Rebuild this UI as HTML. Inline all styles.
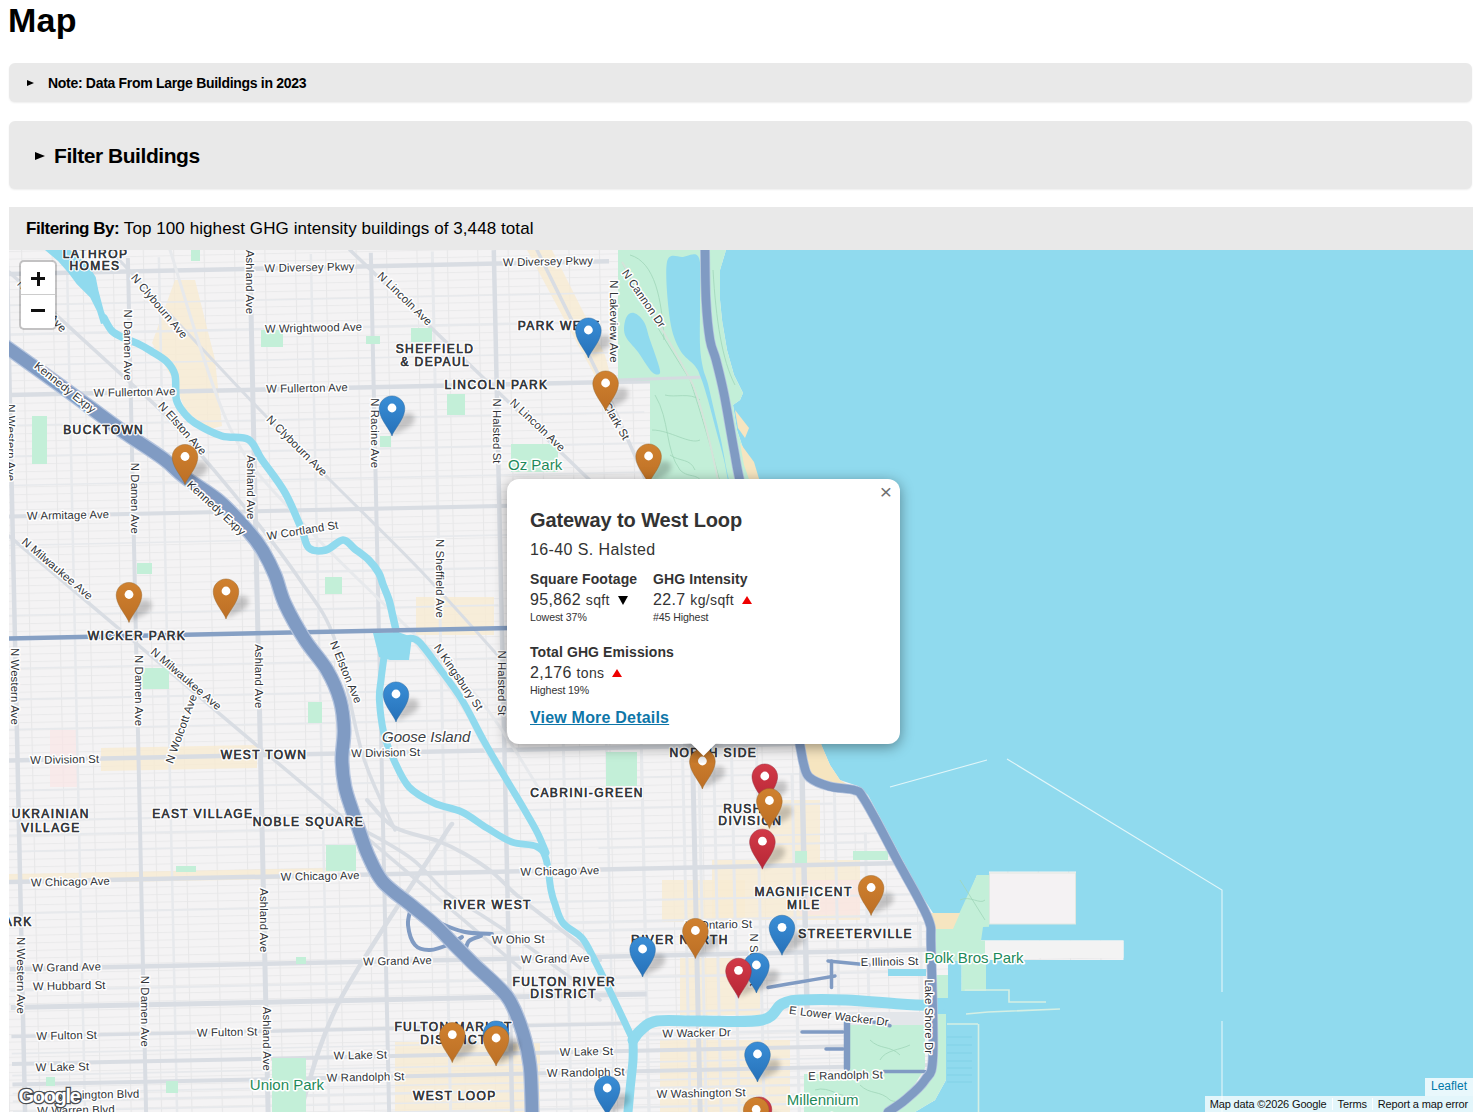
<!DOCTYPE html>
<html><head><meta charset="utf-8"><style>
html,body{margin:0;padding:0;background:#fff;}
body{width:1477px;height:1117px;overflow:hidden;position:relative;font-family:"Liberation Sans",sans-serif;color:#000;}
.abs{position:absolute;white-space:nowrap;}
h1{position:absolute;left:8px;top:0px;margin:0;font-size:34px;font-weight:bold;line-height:40px;letter-spacing:0.3px;}
.box{position:absolute;left:9px;width:1463px;background:#e9e9e9;border-radius:6px;box-shadow:0 1px 2px rgba(0,0,0,0.07);}
#note{top:63px;height:39px;}
#filt{top:121px;height:68px;}
#fby{position:absolute;left:9px;top:207px;width:1464px;height:43px;background:#e9e9e9;}
.tri{position:absolute;width:0;height:0;border-style:solid;border-color:transparent transparent transparent #000;}
#map{position:absolute;left:9px;top:250px;width:1464px;height:862px;overflow:hidden;background:#90daee;}
#map svg{position:absolute;left:0;top:0;}
#zoom{position:absolute;left:10px;top:10px;width:34px;height:66px;border:2px solid rgba(0,0,0,0.2);border-radius:5px;background:#fff;background-clip:padding-box;}
#zoom .zbar{position:absolute;background:#111;}
#zoom .zb{position:absolute;left:0;width:34px;height:33px;text-align:center;font:bold 22px/33px "Liberation Sans",sans-serif;color:#000;}
#popup{position:absolute;left:498px;top:229px;width:393px;height:265px;background:#fff;border-radius:12px;box-shadow:0 3px 14px rgba(0,0,0,0.4);color:#333;}
.pclose{position:absolute;right:8px;top:2px;font-size:21px;line-height:22px;color:#6f6f6f;}
.ptitle{position:absolute;left:23px;top:29px;font-size:20px;font-weight:bold;line-height:24px;white-space:nowrap;letter-spacing:-0.1px;}
.paddr{position:absolute;left:23px;top:61px;font-size:16px;line-height:20px;white-space:nowrap;letter-spacing:0.4px;}
.pcol{position:absolute;white-space:nowrap;}
.plab{font-size:14px;font-weight:bold;line-height:17px;letter-spacing:0.1px;}
.pval{font-size:16px;line-height:19px;margin-top:2px;letter-spacing:0.35px;}
.unit{font-size:14px;}
.arrd{display:inline-block;width:0;height:0;border-style:solid;border-width:9px 5.5px 0 5.5px;border-color:#000 transparent transparent transparent;margin-left:3px;vertical-align:0px;}
.arru{display:inline-block;width:0;height:0;border-style:solid;border-width:0 5.25px 8.5px 5.25px;border-color:transparent transparent #e00 transparent;margin-left:3px;vertical-align:1px;}
.psm{font-size:10.6px;line-height:13px;margin-top:1px;letter-spacing:-0.1px;}
.plink{position:absolute;left:23px;top:229px;font-size:16px;font-weight:bold;line-height:19px;color:#0e76a8;text-decoration:underline;white-space:nowrap;letter-spacing:0.2px;}
.ptipc{position:absolute;left:176px;top:264px;width:40px;height:20px;overflow:hidden;}
.ptip{width:17px;height:17px;padding:1px;margin:-10px auto 0;background:#fff;transform:rotate(45deg);box-shadow:0 3px 14px rgba(0,0,0,0.4);}
#glogo{position:absolute;left:9.5px;top:834px;font:bold 20px/24px "Liberation Sans",sans-serif;color:#fff;-webkit-text-stroke:2.6px #4a4d52;paint-order:stroke fill;letter-spacing:-1.3px;}
#attr1{position:absolute;right:0;top:828px;height:18px;padding:0 6px;background:rgba(255,255,255,0.8);font-size:12px;line-height:17px;color:#0078a8;}
#attr2{position:absolute;right:0;top:846px;height:16px;background:rgba(255,255,255,0.75);font-size:11px;line-height:16px;color:#111;white-space:nowrap;letter-spacing:-0.15px;}
#attr2 span{padding:0 5px;border-left:1px solid rgba(255,255,255,0.9);}
</style></head><body>
<h1>Map</h1>
<div class="box" id="note">
  <div class="tri" style="left:18px;top:17px;border-width:3.5px 0 3.5px 7px;"></div>
  <div class="abs" style="left:39px;top:12px;font-size:14px;font-weight:bold;line-height:17px;letter-spacing:-0.3px;">Note: Data From Large Buildings in 2023</div>
</div>
<div class="box" id="filt">
  <div class="tri" style="left:26px;top:31px;border-width:4.75px 0 4.75px 10.5px;"></div>
  <div class="abs" style="left:45px;top:23px;font-size:21px;font-weight:bold;line-height:24px;letter-spacing:-0.45px;">Filter Buildings</div>
</div>
<div id="fby">
  <div class="abs" style="left:17px;top:12px;font-size:17px;line-height:20px;letter-spacing:0.08px;"><b style="letter-spacing:-0.45px">Filtering By:</b> Top 100 highest GHG intensity buildings of 3,448 total</div>
</div>
<div id="map">
<svg width="1464" height="862" viewBox="9 250 1464 862"><defs><linearGradient id="mgb" x1="0" y1="0" x2="0" y2="1"><stop offset="0" stop-color="#3a8ed6"/><stop offset="1" stop-color="#2671b9"/></linearGradient><linearGradient id="mgr" x1="0" y1="0" x2="0" y2="1"><stop offset="0" stop-color="#d23a48"/><stop offset="1" stop-color="#b72635"/></linearGradient><linearGradient id="mgo" x1="0" y1="0" x2="0" y2="1"><stop offset="0" stop-color="#d0812f"/><stop offset="1" stop-color="#bc6f25"/></linearGradient><filter id="shblur" x="-50%" y="-50%" width="200%" height="200%"><feGaussianBlur stdDeviation="2.6"/></filter></defs><defs><pattern id="grid" patternUnits="userSpaceOnUse" width="30.4" height="7.6" patternTransform="rotate(-1.22 740 680)"><rect width="30.4" height="7.6" fill="#f4f3f4"/><path d="M0,0.5 H30.4" stroke="#eaeaeb" stroke-width="1"/><path d="M0.5,0 V7.6" stroke="#e7e7e8" stroke-width="1"/></pattern></defs><rect x="9" y="250" width="1464" height="862" fill="#90daee"/><path d="M9.0,250.0 L726.0,250.0 L720.0,270.0 L720.0,300.0 L722.0,320.0 L727.0,350.0 L734.0,375.0 L743.0,393.0 L740.0,400.0 L733.0,405.0 L737.0,430.0 L742.0,445.0 L748.0,465.0 L752.0,490.0 L770.0,560.0 L795.0,650.0 L812.0,720.0 L821.0,744.0 L830.0,765.0 L840.0,780.0 L858.0,786.0 L868.0,795.0 L883.0,823.0 L903.0,861.0 L922.0,896.0 L933.0,913.0 L960.0,913.0 L955.0,929.0 L977.0,875.0 L989.0,875.0 L989.0,871.5 L1076.0,871.5 L1076.0,924.0 L982.0,924.0 L980.0,940.5 L1123.5,940.5 L1123.5,960.0 L986.0,960.0 L986.0,991.0 L961.6,991.0 L961.6,961.0 L948.0,961.0 L948.0,997.0 L936.0,997.0 L936.0,1014.0 L946.0,1014.0 L946.0,1080.0 L935.0,1100.0 L915.0,1112.0 L9.0,1112.0 Z" fill="url(#grid)" /><path d="M175.0,280.0 L195.0,280.0 L215.0,359.7 L222.0,426.0 L208.5,429.5 L185.0,409.6 L175.0,383.0 L152.0,343.0 Z" fill="#f8ebd2" opacity="0.8"/><path d="M527.0,250.0 L552.0,250.0 L605.0,355.0 L612.0,382.0 L600.0,385.0 L570.0,330.0 Z" fill="#f8ebd2" opacity="0.8"/><path d="M101.0,748.0 L257.0,745.0 L257.0,768.0 L101.0,771.0 Z" fill="#f8ebd2" opacity="0.8"/><path d="M416.0,597.0 L494.0,597.0 L494.0,635.0 L416.0,635.0 Z" fill="#f8ebd2" opacity="0.8"/><path d="M395.0,1042.0 L540.0,1042.0 L540.0,1112.0 L395.0,1112.0 Z" fill="#f8ebd2" opacity="0.8"/><path d="M680.0,958.0 L760.0,958.0 L760.0,1015.0 L680.0,1015.0 Z" fill="#f8ebd2" opacity="0.8"/><path d="M662.0,880.0 L745.0,880.0 L745.0,922.0 L662.0,922.0 Z" fill="#f8ebd2" opacity="0.8"/><path d="M660.0,1040.0 L790.0,1040.0 L790.0,1112.0 L660.0,1112.0 Z" fill="#f8ebd2" opacity="0.8"/><path d="M712.0,860.0 L860.0,860.0 L860.0,920.0 L712.0,920.0 Z" fill="#f8ebd2" opacity="0.8"/><path d="M760.0,800.0 L820.0,800.0 L820.0,860.0 L760.0,860.0 Z" fill="#f8ebd2" opacity="0.8"/><path d="M9.0,874.0 L330.0,868.0 L330.0,878.0 L9.0,884.0 Z" fill="#f8ebd2" opacity="0.8"/><path d="M50.0,730.0 L78.0,730.0 L78.0,787.0 L50.0,787.0 Z" fill="#f9e6e6" opacity="0.7"/><path d="M800.0,880.0 L860.0,880.0 L860.0,915.0 L800.0,915.0 Z" fill="#f9e6e6" opacity="0.7"/><clipPath id="landclip"><path d="M9.0,250.0 L726.0,250.0 L720.0,270.0 L720.0,300.0 L722.0,320.0 L727.0,350.0 L734.0,375.0 L743.0,393.0 L740.0,400.0 L733.0,405.0 L737.0,430.0 L742.0,445.0 L748.0,465.0 L752.0,490.0 L770.0,560.0 L795.0,650.0 L812.0,720.0 L821.0,744.0 L830.0,765.0 L840.0,780.0 L858.0,786.0 L868.0,795.0 L883.0,823.0 L903.0,861.0 L922.0,896.0 L933.0,913.0 L960.0,913.0 L955.0,929.0 L977.0,875.0 L989.0,875.0 L989.0,871.5 L1076.0,871.5 L1076.0,924.0 L982.0,924.0 L980.0,940.5 L1123.5,940.5 L1123.5,960.0 L986.0,960.0 L986.0,991.0 L961.6,991.0 L961.6,961.0 L948.0,961.0 L948.0,997.0 L936.0,997.0 L936.0,1014.0 L946.0,1014.0 L946.0,1080.0 L935.0,1100.0 L915.0,1112.0 L9.0,1112.0 Z"/></clipPath><g clip-path="url(#landclip)"><g transform="rotate(-1.22 740 680)"><path d="M4,319 H618" stroke="#e7e9ec" stroke-width="2.4"/><path d="M255,562.7 H500" stroke="#e7e9ec" stroke-width="2.4"/><path d="M4,975 H930" stroke="#e7e9ec" stroke-width="2.4"/><path d="M4,1086 H936" stroke="#e7e9ec" stroke-width="2.4"/><path d="M4,1105 H936" stroke="#e7e9ec" stroke-width="2.4"/><path d="M475,927.3 H930" stroke="#e7e9ec" stroke-width="2.8"/><path d="M555,918.8 H930" stroke="#e7e9ec" stroke-width="2.4"/><path d="M4,441 H650" stroke="#e7e9ec" stroke-width="2.0"/><path d="M4,684 H700" stroke="#e7e9ec" stroke-width="2.0"/><path d="M4,805.5 H830" stroke="#e7e9ec" stroke-width="2.0"/><path d="M4,898 H930" stroke="#e7e9ec" stroke-width="2.0"/><path d="M635,1032 H936" stroke="#e7e9ec" stroke-width="2.8"/><path d="M635,1010 H936" stroke="#e7e9ec" stroke-width="2.0"/><path d="M595,845 H866" stroke="#e7e9ec" stroke-width="2.0"/><path d="M4,820 H300" stroke="#e7e9ec" stroke-width="2.0"/><path d="M4,600 H500" stroke="#e7e9ec" stroke-width="1.6"/><path d="M4,470 H650" stroke="#e7e9ec" stroke-width="1.6"/><path d="M4,290 H618" stroke="#e7e9ec" stroke-width="1.6"/><path d="M4,350 H618" stroke="#e7e9ec" stroke-width="1.6"/><path d="M4,410 H650" stroke="#e7e9ec" stroke-width="1.6"/><path d="M4,530 H700" stroke="#e7e9ec" stroke-width="1.6"/><path d="M4,653 H700" stroke="#e7e9ec" stroke-width="1.6"/><path d="M4,714 H700" stroke="#e7e9ec" stroke-width="1.6"/><path d="M4,775 H830" stroke="#e7e9ec" stroke-width="1.6"/><path d="M4,836 H880" stroke="#e7e9ec" stroke-width="1.6"/><path d="M4,1038 H936" stroke="#e7e9ec" stroke-width="1.6"/><path d="M4,1060 H936" stroke="#e7e9ec" stroke-width="1.6"/><path d="M4,1078 H936" stroke="#e7e9ec" stroke-width="1.6"/><path d="M4,1096 H936" stroke="#e7e9ec" stroke-width="1.6"/><path d="M441.5,245 V1122" stroke="#e7e9ec" stroke-width="3"/><path d="M562,735 V1122" stroke="#e7e9ec" stroke-width="3"/><path d="M640,740 V1122" stroke="#e7e9ec" stroke-width="3"/><path d="M681,740 V1122" stroke="#e7e9ec" stroke-width="3"/><path d="M697,740 V1122" stroke="#e7e9ec" stroke-width="3"/><path d="M712,740 V1122" stroke="#e7e9ec" stroke-width="3"/><path d="M730,740 V1122" stroke="#e7e9ec" stroke-width="3"/><path d="M755,740 V1122" stroke="#e7e9ec" stroke-width="3"/><path d="M790,775 V1122" stroke="#e7e9ec" stroke-width="3"/><path d="M832,785 V1010" stroke="#e7e9ec" stroke-width="3"/><path d="M862,835 V1010" stroke="#e7e9ec" stroke-width="3"/><path d="M168,245 V1122" stroke="#e7e9ec" stroke-width="2.5"/><path d="M320,245 V1122" stroke="#e7e9ec" stroke-width="2.5"/><path d="M76,245 V1122" stroke="#e7e9ec" stroke-width="2.5"/><path d="M605,740 V1122" stroke="#e7e9ec" stroke-width="2.5"/><path d="M915,925 V1010" stroke="#e7e9ec" stroke-width="3"/><path d="M4,258.5 H618" stroke="#d9dde3" stroke-width="4.5"/><path d="M4,379.5 H726" stroke="#d9dde3" stroke-width="4.5"/><path d="M4,501 H700" stroke="#d9dde3" stroke-width="4"/><path d="M4,745 H830" stroke="#d9dde3" stroke-width="4.5"/><path d="M4,866.5 H925" stroke="#d9dde3" stroke-width="4.5"/><path d="M4,953.7 H930" stroke="#d9dde3" stroke-width="4.5"/><path d="M4,1048.5 H936" stroke="#d9dde3" stroke-width="4"/><path d="M4,1069 H936" stroke="#d9dde3" stroke-width="4"/><path d="M4,1021 H620" stroke="#d9dde3" stroke-width="3.5"/><path d="M4,992 H640" stroke="#d9dde3" stroke-width="5"/><path d="M16,245 V1122" stroke="#d9dde3" stroke-width="4.5"/><path d="M137,245 V1122" stroke="#d9dde3" stroke-width="4"/><path d="M259,245 V1122" stroke="#d9dde3" stroke-width="5"/><path d="M380,245 V1122" stroke="#d9dde3" stroke-width="4"/><path d="M503,245 V1122" stroke="#d9dde3" stroke-width="4.5"/><path d="M691,740 V1122" stroke="#d9dde3" stroke-width="5"/><path d="M800,740 V1010" stroke="#d9dde3" stroke-width="5.5"/></g></g><path d="M9.0,536.0 C32.5,555.8 108.2,619.7 150.0,655.0 C191.8,690.3 225.0,718.5 260.0,748.0 C295.0,777.5 330.0,806.7 360.0,832.0 C390.0,857.3 413.3,877.3 440.0,900.0 C466.7,922.7 506.7,956.7 520.0,968.0" fill="none" stroke="#d9dde3" stroke-width="3.5" stroke-linecap="round" stroke-linejoin="round" /><path d="M9.0,272.0 C28.2,289.5 97.2,352.3 124.0,377.0 C150.8,401.7 149.5,397.8 170.0,420.0 C190.5,442.2 225.3,483.3 247.0,510.0 C268.7,536.7 285.3,558.3 300.0,580.0 C314.7,601.7 324.5,610.7 335.0,640.0 C345.5,669.3 353.0,724.3 363.0,756.0 C373.0,787.7 389.7,817.7 395.0,830.0" fill="none" stroke="#d9dde3" stroke-width="3.5" stroke-linecap="round" stroke-linejoin="round" /><path d="M110.0,250.0 C135.0,276.7 223.3,371.7 260.0,410.0 C296.7,448.3 303.3,453.3 330.0,480.0 C356.7,506.7 391.3,540.0 420.0,570.0 C448.7,600.0 488.3,645.0 502.0,660.0" fill="none" stroke="#d9dde3" stroke-width="3" stroke-linecap="round" stroke-linejoin="round" /><path d="M350.0,250.0 C370.0,269.2 428.3,325.0 470.0,365.0 C511.7,405.0 578.3,469.2 600.0,490.0" fill="none" stroke="#d9dde3" stroke-width="3.5" stroke-linecap="round" stroke-linejoin="round" /><path d="M537.0,250.0 C547.7,271.7 585.8,348.3 601.0,380.0 C616.2,411.7 619.8,421.7 628.0,440.0 C636.2,458.3 646.3,481.7 650.0,490.0" fill="none" stroke="#d9dde3" stroke-width="3.5" stroke-linecap="round" stroke-linejoin="round" /><path d="M300.0,1112.0 C306.7,1093.3 317.0,1044.5 340.0,1000.0 C363.0,955.5 419.3,874.3 438.0,845.0 C456.7,815.7 449.7,827.5 452.0,824.0" fill="none" stroke="#d9dde3" stroke-width="4.5" stroke-linecap="round" stroke-linejoin="round" /><path d="M413.0,640.0 C417.5,646.0 431.2,663.8 440.0,676.0 C448.8,688.2 457.5,699.0 466.0,713.0 C474.5,727.0 480.8,743.8 491.0,760.0 C501.2,776.2 521.0,801.7 527.0,810.0" fill="none" stroke="#e7e9ec" stroke-width="2.5" stroke-linecap="round" stroke-linejoin="round" /><path d="M170.0,250.0 C180.0,279.7 208.3,383.0 230.0,428.0 C251.7,473.0 271.7,488.0 300.0,520.0 C328.3,552.0 370.0,590.0 400.0,620.0 C430.0,650.0 456.7,671.7 480.0,700.0 C503.3,728.3 530.0,775.0 540.0,790.0" fill="none" stroke="#e7e9ec" stroke-width="3" stroke-linecap="round" stroke-linejoin="round" /><path d="M367.0,800.0 C371.5,804.5 382.2,820.2 394.0,827.0 C405.8,833.8 426.2,836.5 438.0,841.0 C449.8,845.5 456.0,848.8 465.0,854.0 C474.0,859.2 483.0,864.8 492.0,872.0 C501.0,879.2 507.7,887.5 519.0,897.0 C530.3,906.5 546.5,918.5 560.0,929.0 C573.5,939.5 593.3,954.8 600.0,960.0" fill="none" stroke="#d9dde3" stroke-width="4" stroke-linecap="round" stroke-linejoin="round" /><path d="M330.0,815.0 C336.2,817.8 353.3,824.7 367.0,832.0 C380.7,839.3 398.7,848.8 412.0,859.0 C425.3,869.2 435.2,883.5 447.0,893.0 C458.8,902.5 471.0,908.2 483.0,916.0 C495.0,923.8 506.2,931.0 519.0,940.0 C531.8,949.0 546.5,960.0 560.0,970.0 C573.5,980.0 593.3,995.0 600.0,1000.0" fill="none" stroke="#d9dde3" stroke-width="3.5" stroke-linecap="round" stroke-linejoin="round" /><path d="M267.0,536.0 L337.0,525.0" fill="none" stroke="#e7e9ec" stroke-width="2.5" stroke-linecap="round" stroke-linejoin="round" /><path d="M618.0,250.0 L726.0,250.0 L720.0,270.0 L720.0,300.0 L722.0,320.0 L727.0,350.0 L734.0,375.0 L743.0,393.0 L740.0,400.0 L733.0,405.0 L737.0,430.0 L742.0,445.0 L748.0,465.0 L752.0,490.0 L650.0,490.0 L650.0,381.0 L618.0,381.0 Z" fill="#c3efd8" /><path d="M952.0,929.0 L977.0,875.0 L989.0,875.0 L989.0,926.7 L983.0,927.0 L981.0,941.0 L973.0,941.0 L973.0,961.0 L929.0,961.0 L929.0,929.0 Z" fill="#c3efd8" /><path d="M961.6,960.0 L986.0,960.0 L986.0,991.0 L961.6,991.0 Z" fill="#c3efd8" /><path d="M936.0,975.0 L948.0,975.0 L948.0,997.0 L936.0,997.0 Z" fill="#c3efd8" /><path d="M804.0,1074.0 L847.0,1074.0 L847.0,1025.0 L925.0,1025.0 L925.0,1068.0 L905.0,1100.0 L888.0,1112.0 L804.0,1112.0 Z" fill="#c3efd8" /><path d="M935.0,1014.0 L946.0,1014.0 L946.0,1080.0 L935.0,1100.0 L915.0,1112.0 L895.0,1112.0 L922.0,1090.0 L931.0,1070.0 Z" fill="#c3efd8" /><path d="M272.0,1058.0 L306.0,1058.0 L306.0,1112.0 L272.0,1112.0 Z" fill="#c3efd8" /><rect x="511" y="444" width="47" height="28" fill="#c3efd8"/><rect x="411" y="328" width="21" height="14" fill="#c3efd8"/><rect x="447" y="394" width="18" height="21" fill="#c3efd8"/><rect x="380" y="436" width="11" height="11" fill="#c3efd8"/><rect x="191" y="250" width="9" height="11" fill="#c3efd8"/><rect x="261" y="330" width="22" height="17" fill="#c3efd8"/><rect x="32" y="416" width="15" height="48" fill="#c3efd8"/><rect x="366" y="336" width="14" height="8" fill="#c3efd8"/><rect x="137" y="563" width="15" height="11" fill="#c3efd8"/><rect x="142" y="668" width="27" height="21" fill="#c3efd8"/><rect x="308" y="702" width="14" height="21" fill="#c3efd8"/><rect x="325" y="577" width="17" height="17" fill="#c3efd8"/><rect x="326" y="845" width="30" height="26" fill="#c3efd8"/><rect x="606" y="752" width="31" height="34" fill="#c3efd8"/><rect x="853" y="851" width="35" height="9" fill="#c3efd8"/><rect x="795" y="851" width="12" height="12" fill="#c3efd8"/><rect x="936" y="975" width="12" height="23" fill="#c3efd8"/><rect x="46" y="1077" width="9" height="9" fill="#c3efd8"/><rect x="166" y="1081" width="12" height="12" fill="#c3efd8"/><rect x="296" y="957" width="10" height="7" fill="#c3efd8"/><rect x="176" y="866" width="20" height="6" fill="#c3efd8"/><path d="M735.0,410.0 L749.0,428.0 L745.0,438.0 L738.0,428.0 Z" fill="#f6e5c0" /><path d="M740.0,443.0 L754.0,462.0 L760.0,482.0 L750.0,482.0 L744.0,465.0 Z" fill="#f6e5c0" /><path d="M805.0,744.0 L821.0,744.0 L830.0,765.0 L840.0,780.0 L850.0,786.0 L829.0,782.0 L812.0,775.0 L807.0,760.0 Z" fill="#f6e5c0" /><path d="M929.0,913.0 L960.0,913.0 L953.0,929.0 L932.0,929.0 Z" fill="#f6e5c0" /><g fill="none" stroke="#9fd6b9" stroke-width="0.8"><path d="M622,262 C640,300 668,345 690,380 C700,410 712,450 722,490"/><path d="M630,255 C655,262 662,300 664,340"/><path d="M655,395 C670,420 665,450 680,470 C690,480 700,470 705,490"/><path d="M652,430 C670,430 690,445 700,440"/><path d="M713,270 C716,320 722,360 735,385"/><path d="M665,395 C675,398 690,392 700,400 M670,455 C680,462 690,458 695,470"/><path d="M860,1085 C870,1095 880,1090 890,1100 C900,1105 905,1095 915,1090 M815,1090 C830,1085 840,1100 855,1095"/><path d="M870,1040 C880,1050 890,1045 900,1055 M880,1060 C885,1050 900,1050 910,1045"/><path d="M960,880 L985,920 M960,900 C970,895 980,905 985,900"/></g><path d="M622,262 C645,300 675,350 693,385 C703,410 712,450 720,490" fill="none" stroke="#d5e3da" stroke-width="2"/><path d="M618,380 L706,377" stroke="#d5dbe0" stroke-width="3"/><rect x="989.5" y="873" width="86" height="51" fill="#f4f2f3" stroke="#dfe8e2"/><rect x="981" y="940.5" width="142.5" height="17.5" fill="#f3f3f3"/><rect x="973" y="940.5" width="12" height="17.5" fill="#c3efd8"/><path d="M667.0,262.0 C669.2,251.5 677.7,257.7 683.0,257.0 C688.3,256.3 696.2,250.8 699.0,258.0 C701.8,265.2 699.8,285.5 700.0,300.0 C700.2,314.5 699.5,333.7 700.0,345.0 C700.5,356.3 701.7,361.5 703.0,368.0 C704.3,374.5 706.2,377.0 708.0,384.0 C709.8,391.0 711.8,400.7 714.0,410.0 C716.2,419.3 718.5,428.3 721.0,440.0 C723.5,451.7 726.5,470.8 729.0,480.0 C731.5,489.2 735.7,492.5 736.0,495.0 C736.3,497.5 733.0,500.8 731.0,495.0 C729.0,489.2 726.5,470.8 724.0,460.0 C721.5,449.2 718.7,440.0 716.0,430.0 C713.3,420.0 710.5,408.7 708.0,400.0 C705.5,391.3 703.2,383.7 701.0,378.0 C698.8,372.3 698.5,370.7 695.0,366.0 C691.5,361.3 684.2,357.7 680.0,350.0 C675.8,342.3 672.2,334.7 670.0,320.0 C667.8,305.3 664.8,272.5 667.0,262.0 Z" fill="#90daee" /><path d="M626.0,318.0 C627.5,314.3 631.0,312.3 634.0,313.0 C637.0,313.7 641.3,317.5 644.0,322.0 C646.7,326.5 647.8,333.7 650.0,340.0 C652.2,346.3 655.3,354.5 657.0,360.0 C658.7,365.5 660.8,371.0 660.0,373.0 C659.2,375.0 655.7,375.5 652.0,372.0 C648.3,368.5 642.5,358.2 638.0,352.0 C633.5,345.8 627.0,340.7 625.0,335.0 C623.0,329.3 624.5,321.7 626.0,318.0 Z" fill="#90daee" /><path d="M888.0,969.0 L926.0,969.0 L926.0,976.0 L888.0,976.0 Z" fill="#90daee" /><path d="M45.0,250.0 L70.0,250.0 L88.0,265.0 L95.7,277.0 L98.4,290.6 L103.8,311.0 L108.0,322.0 L101.0,324.0 L97.0,311.0 L90.2,297.4 L76.7,283.9 L68.6,273.0 L58.0,261.0 Z" fill="#90daee" /><path d="M104.0,318.0 C105.3,320.2 108.7,327.7 112.0,331.0 C115.3,334.3 119.7,335.9 124.0,338.0 C128.3,340.1 133.1,341.3 137.6,343.5 C142.1,345.7 146.2,348.0 151.0,351.0 C155.8,354.0 162.7,357.6 166.7,361.6 C170.7,365.6 173.4,368.6 175.0,375.0 C176.6,381.4 174.8,393.5 176.5,400.0 C178.2,406.5 181.9,410.2 185.0,414.0 C188.1,417.8 188.9,419.3 195.0,423.0 C201.1,426.7 212.9,433.2 221.8,436.0 C230.7,438.8 241.8,435.6 248.4,439.5 C255.1,443.4 255.6,450.5 261.7,459.4 C267.8,468.3 278.4,481.1 285.0,492.7 C291.6,504.3 297.6,520.1 301.6,529.3 C305.6,538.5 304.9,544.5 309.0,548.0 C313.1,551.5 320.3,551.3 326.0,550.0 C331.7,548.7 338.2,540.2 343.0,540.0 C347.8,539.8 350.2,545.4 354.5,548.7 C358.8,552.0 364.8,556.0 368.8,560.0 C372.9,564.0 376.4,568.9 378.8,573.0 C381.2,577.1 381.3,580.0 383.0,584.5 C384.7,589.0 387.3,594.6 389.0,600.0 C390.7,605.4 391.8,612.0 393.0,617.0 C394.2,622.0 395.5,627.8 396.0,630.0" fill="none" stroke="#90daee" stroke-width="7.5" stroke-linecap="round" stroke-linejoin="round" /><path d="M373.0,633.0 L398.0,632.0 L412.0,637.0 L409.0,660.0 L390.0,660.0 L379.0,657.0 Z" fill="#90daee" /><path d="M384.0,657.0 C383.5,660.8 381.8,672.8 381.0,680.0 C380.2,687.2 378.9,691.0 379.4,700.0 C379.9,709.0 381.7,724.2 384.0,734.0 C386.3,743.8 389.2,750.2 393.4,759.0 C397.6,767.8 402.2,779.7 409.0,787.0 C415.8,794.3 425.2,798.8 434.0,803.0 C442.8,807.2 453.2,807.8 462.0,812.0 C470.8,816.2 478.7,823.0 487.0,828.0 C495.3,833.0 503.5,838.9 511.8,842.0 C520.1,845.1 531.0,843.7 536.7,846.5 C542.4,849.3 543.6,851.8 546.0,859.0 C548.4,866.2 549.5,882.5 551.0,890.0 C552.5,897.5 553.0,898.5 555.0,904.0 C557.0,909.5 558.5,917.3 563.0,923.0 C567.5,928.7 576.8,932.0 582.0,938.0 C587.2,944.0 590.0,951.5 594.0,959.0 C598.0,966.5 602.0,974.8 606.0,983.0 C610.0,991.2 613.5,998.5 618.0,1008.0 C622.5,1017.5 630.5,1034.7 633.0,1040.0" fill="none" stroke="#90daee" stroke-width="7" stroke-linecap="round" stroke-linejoin="round" /><path d="M405.0,639.0 C407.2,639.3 412.2,636.0 418.0,641.0 C423.8,646.0 432.7,659.2 440.0,669.0 C447.3,678.8 454.7,688.1 462.0,700.0 C469.3,711.9 476.4,727.6 483.7,740.6 C490.9,753.6 498.8,766.6 505.5,778.0 C512.2,789.4 518.8,800.0 524.0,809.0 C529.2,818.0 533.3,824.7 537.0,832.0 C540.7,839.3 544.5,849.2 546.0,852.7" fill="none" stroke="#90daee" stroke-width="7" stroke-linecap="round" stroke-linejoin="round" /><path d="M633.0,1040.0 C634.3,1038.3 637.0,1033.2 641.0,1030.0 C645.0,1026.8 647.2,1022.5 657.0,1021.0 C666.8,1019.5 682.5,1021.2 700.0,1021.0 C717.5,1020.8 748.3,1022.8 762.0,1020.0 C775.7,1017.2 775.3,1007.3 782.0,1004.0 C788.7,1000.7 791.3,1000.7 802.0,1000.0 C812.7,999.3 829.7,999.3 846.0,1000.0 C862.3,1000.7 884.3,1003.0 900.0,1004.0 C915.7,1005.0 933.3,1005.7 940.0,1006.0" fill="none" stroke="#90daee" stroke-width="11" stroke-linecap="round" stroke-linejoin="round" /><path d="M633.0,1040.0 C633.0,1043.3 633.5,1051.7 633.0,1060.0 C632.5,1068.3 630.8,1081.3 630.0,1090.0 C629.2,1098.7 628.3,1108.3 628.0,1112.0" fill="none" stroke="#90daee" stroke-width="9" stroke-linecap="round" stroke-linejoin="round" /><path d="M890,787 L987,760 M1007,759 L1222,890 L1222,992 M1222,1021 L1222,1112" stroke="#e2f6f9" stroke-width="1.1" fill="none"/><path d="M964.7,990 H1009 V1002 H1046 M966,1014 L988,1012 L1060,1009 M978.5,1024 L978.5,1112 M947,1024 H978" stroke="#d5efe4" stroke-width="1.6" fill="none"/><path d="M947,1037 H972 M947,1045 H972 M947,1053 H972 M947,1061 H972 M947,1068 H972 M947,1075 H972 M947,1082 H972" stroke="#7fcfe3" stroke-width="0.8" fill="none"/><rect x="847" y="1012" width="78" height="13" fill="#e3e6ea"/><g transform="rotate(-1.22 740 680)"><path d="M4,623 H760" stroke="#86a0c4" stroke-width="4.5"/></g><path d="M847.0,1023.0 L847.0,1068.0" fill="none" stroke="#809bc3" stroke-width="6.5" stroke-linecap="round" stroke-linejoin="round" /><path d="M802.0,1032.0 L843.0,1032.0" fill="none" stroke="#809bc3" stroke-width="3.5" stroke-linecap="round" stroke-linejoin="round" /><path d="M826.0,1049.0 L843.0,1049.0" fill="none" stroke="#809bc3" stroke-width="3.5" stroke-linecap="round" stroke-linejoin="round" /><path d="M768.0,987.5 C773.3,986.6 788.8,983.9 800.0,982.0 C811.2,980.1 829.2,977.0 835.0,976.0" fill="none" stroke="#809bc3" stroke-width="3.5" stroke-linecap="round" stroke-linejoin="round" /><path d="M828.0,961.0 L869.0,965.0" fill="none" stroke="#809bc3" stroke-width="3.5" stroke-linecap="round" stroke-linejoin="round" /><path d="M831.5,961.0 L831.5,987.5" fill="none" stroke="#809bc3" stroke-width="3.5" stroke-linecap="round" stroke-linejoin="round" /><path d="M884.0,1071.5 L925.0,1071.5" fill="none" stroke="#809bc3" stroke-width="3.5" stroke-linecap="round" stroke-linejoin="round" /><path d="M860.0,1019.0 L890.0,1025.7" fill="none" stroke="#809bc3" stroke-width="3.5" stroke-linecap="round" stroke-linejoin="round" /><path d="M411.0,908.0 C410.5,910.8 407.3,918.8 408.0,925.0 C408.7,931.2 411.3,940.8 415.0,945.0 C418.7,949.2 424.2,950.2 430.0,950.0 C435.8,949.8 444.7,946.2 450.0,944.0 C455.3,941.8 460.0,938.2 462.0,937.0" fill="none" stroke="#809bc3" stroke-width="4" stroke-linecap="round" stroke-linejoin="round" /><path d="M412.0,907.0 C416.7,909.7 431.2,918.8 440.0,923.0 C448.8,927.2 456.3,930.2 465.0,932.0 C473.7,933.8 487.5,933.7 492.0,934.0" fill="none" stroke="#809bc3" stroke-width="4" stroke-linecap="round" stroke-linejoin="round" /><path d="M465.0,952.0 C465.7,950.2 466.3,943.7 469.0,941.0 C471.7,938.3 479.0,936.8 481.0,936.0" fill="none" stroke="#809bc3" stroke-width="4" stroke-linecap="round" stroke-linejoin="round" /><path d="M5.0,346.0 C15.0,353.2 45.8,375.1 65.0,389.0 C84.2,402.9 103.7,417.7 120.0,429.3 C136.3,440.9 152.2,450.6 163.0,458.5 C173.8,466.4 175.0,469.8 184.5,477.0 C194.0,484.2 209.2,492.5 220.0,501.7 C230.8,510.9 241.8,523.8 249.0,532.0 C256.2,540.2 258.7,543.8 263.0,551.0 C267.3,558.2 271.3,566.2 275.0,575.0 C278.7,583.8 280.0,593.2 285.0,604.0 C290.0,614.8 298.0,629.0 305.0,640.0 C312.0,651.0 321.2,660.0 327.0,670.0 C332.8,680.0 337.2,690.0 340.0,700.0 C342.8,710.0 343.7,720.0 344.0,730.0 C344.3,740.0 341.8,750.5 342.0,760.0 C342.2,769.5 343.3,778.7 345.0,787.0 C346.7,795.3 349.8,803.3 352.0,810.0 C354.2,816.7 355.3,819.5 358.0,827.0 C360.7,834.5 363.8,845.8 368.0,855.0 C372.2,864.2 375.7,873.6 383.0,882.0 C390.3,890.4 402.9,898.4 411.6,905.6 C420.3,912.8 427.8,918.4 435.0,925.0 C442.2,931.6 448.1,938.4 454.6,945.0 C461.2,951.6 467.5,958.1 474.3,964.7 C481.1,971.3 489.8,978.4 495.7,984.4 C501.6,990.4 505.4,992.9 510.0,1001.0 C514.5,1009.1 519.7,1022.2 523.0,1033.0 C526.3,1043.8 528.5,1052.8 530.0,1066.0 C531.5,1079.2 531.7,1104.3 532.0,1112.0" fill="none" stroke="#b4c4de" stroke-width="15" stroke-linecap="round" stroke-linejoin="round" /><path d="M5.0,346.0 C15.0,353.2 45.8,375.1 65.0,389.0 C84.2,402.9 103.7,417.7 120.0,429.3 C136.3,440.9 152.2,450.6 163.0,458.5 C173.8,466.4 175.0,469.8 184.5,477.0 C194.0,484.2 209.2,492.5 220.0,501.7 C230.8,510.9 241.8,523.8 249.0,532.0 C256.2,540.2 258.7,543.8 263.0,551.0 C267.3,558.2 271.3,566.2 275.0,575.0 C278.7,583.8 280.0,593.2 285.0,604.0 C290.0,614.8 298.0,629.0 305.0,640.0 C312.0,651.0 321.2,660.0 327.0,670.0 C332.8,680.0 337.2,690.0 340.0,700.0 C342.8,710.0 343.7,720.0 344.0,730.0 C344.3,740.0 341.8,750.5 342.0,760.0 C342.2,769.5 343.3,778.7 345.0,787.0 C346.7,795.3 349.8,803.3 352.0,810.0 C354.2,816.7 355.3,819.5 358.0,827.0 C360.7,834.5 363.8,845.8 368.0,855.0 C372.2,864.2 375.7,873.6 383.0,882.0 C390.3,890.4 402.9,898.4 411.6,905.6 C420.3,912.8 427.8,918.4 435.0,925.0 C442.2,931.6 448.1,938.4 454.6,945.0 C461.2,951.6 467.5,958.1 474.3,964.7 C481.1,971.3 489.8,978.4 495.7,984.4 C501.6,990.4 505.4,992.9 510.0,1001.0 C514.5,1009.1 519.7,1022.2 523.0,1033.0 C526.3,1043.8 528.5,1052.8 530.0,1066.0 C531.5,1079.2 531.7,1104.3 532.0,1112.0" fill="none" stroke="#809bc3" stroke-width="12.5" stroke-linecap="round" stroke-linejoin="round" /><path d="M705.0,250.0 C705.2,258.3 705.2,285.0 706.0,300.0 C706.8,315.0 708.3,330.0 710.0,340.0 C711.7,350.0 713.7,351.0 716.0,360.0 C718.3,369.0 721.0,379.0 724.0,394.0 C727.0,409.0 731.0,434.0 734.0,450.0 C737.0,466.0 736.0,465.0 742.0,490.0 C748.0,515.0 762.0,565.0 770.0,600.0 C778.0,635.0 785.0,676.0 790.0,700.0 C795.0,724.0 797.4,733.4 799.7,744.0 C802.0,754.6 802.0,758.0 803.6,763.6 C805.2,769.2 805.2,773.6 809.5,777.4 C813.8,781.2 821.7,784.2 829.2,786.3 C836.8,788.4 849.2,788.4 854.8,790.2 C860.4,792.0 858.8,791.2 862.7,797.0 C866.7,802.8 872.6,813.9 878.5,824.7 C884.4,835.6 891.7,850.0 898.2,862.1 C904.8,874.2 912.5,887.3 917.8,897.5 C923.0,907.7 927.5,915.2 929.7,923.1 C931.9,931.0 930.5,923.0 931.0,945.0 C931.5,967.0 934.0,1032.5 933.0,1055.0 C932.0,1077.5 929.7,1072.5 925.0,1080.0 C920.3,1087.5 911.2,1094.7 905.0,1100.0 C898.8,1105.3 890.8,1110.0 888.0,1112.0" fill="none" stroke="#b4c4de" stroke-width="10" stroke-linecap="round" stroke-linejoin="round" /><path d="M705.0,250.0 C705.2,258.3 705.2,285.0 706.0,300.0 C706.8,315.0 708.3,330.0 710.0,340.0 C711.7,350.0 713.7,351.0 716.0,360.0 C718.3,369.0 721.0,379.0 724.0,394.0 C727.0,409.0 731.0,434.0 734.0,450.0 C737.0,466.0 736.0,465.0 742.0,490.0 C748.0,515.0 762.0,565.0 770.0,600.0 C778.0,635.0 785.0,676.0 790.0,700.0 C795.0,724.0 797.4,733.4 799.7,744.0 C802.0,754.6 802.0,758.0 803.6,763.6 C805.2,769.2 805.2,773.6 809.5,777.4 C813.8,781.2 821.7,784.2 829.2,786.3 C836.8,788.4 849.2,788.4 854.8,790.2 C860.4,792.0 858.8,791.2 862.7,797.0 C866.7,802.8 872.6,813.9 878.5,824.7 C884.4,835.6 891.7,850.0 898.2,862.1 C904.8,874.2 912.5,887.3 917.8,897.5 C923.0,907.7 927.5,915.2 929.7,923.1 C931.9,931.0 930.5,923.0 931.0,945.0 C931.5,967.0 934.0,1032.5 933.0,1055.0 C932.0,1077.5 929.7,1072.5 925.0,1080.0 C920.3,1087.5 911.2,1094.7 905.0,1100.0 C898.8,1105.3 890.8,1110.0 888.0,1112.0" fill="none" stroke="#809bc3" stroke-width="8.5" stroke-linecap="round" stroke-linejoin="round" /><g font-family="Liberation Sans, sans-serif" font-size="11.3" letter-spacing="0.15" fill="#303337" stroke="#fff" stroke-width="3" stroke-linejoin="round" paint-order="stroke" text-anchor="middle" dominant-baseline="central"><text transform="translate(309.5,267.2) rotate(-1.2)" x="0" y="0">W Diversey Pkwy</text><text transform="translate(548.0,261.3) rotate(-1.2)" x="0" y="0">W Diversey Pkwy</text><text transform="translate(249.8,282.0) rotate(90)" x="0" y="0">Ashland Ave</text><text transform="translate(159.6,306.2) rotate(49.8)" x="0" y="0">N Clybourn Ave</text><text transform="translate(313.5,327.7) rotate(-1.2)" x="0" y="0">W Wrightwood Ave</text><text transform="translate(128.2,345.0) rotate(90)" x="0" y="0">N Damen Ave</text><text transform="translate(42.0,306.0) rotate(47)" x="0" y="0">N Elston Ave</text><text transform="translate(65.2,387.4) rotate(38.4)" x="0" y="0">Kennedy Expy</text><text transform="translate(134.6,392.0) rotate(-1.2)" x="0" y="0">W Fullerton Ave</text><text transform="translate(307.0,388.0) rotate(-1.2)" x="0" y="0">W Fullerton Ave</text><text transform="translate(182.5,428.3) rotate(48.5)" x="0" y="0">N Elston Ave</text><text transform="translate(11.1,442.7) rotate(90)" x="0" y="0">N Western Ave</text><text transform="translate(134.6,498.3) rotate(90)" x="0" y="0">N Damen Ave</text><text transform="translate(251.2,487.3) rotate(90)" x="0" y="0">Ashland Ave</text><text transform="translate(297.0,445.6) rotate(45)" x="0" y="0">N Clybourn Ave</text><text transform="translate(374.7,433.2) rotate(90)" x="0" y="0">N Racine Ave</text><text transform="translate(216.5,508.0) rotate(42.3)" x="0" y="0">Kennedy Expy</text><text transform="translate(68.0,515.0) rotate(-1.2)" x="0" y="0">W Armitage Ave</text><text transform="translate(302.5,530.3) rotate(-9)" x="0" y="0">W Cortland St</text><text transform="translate(57.5,568.7) rotate(40.3)" x="0" y="0">N Milwaukee Ave</text><text transform="translate(405.0,298.6) rotate(44.2)" x="0" y="0">N Lincoln Ave</text><text transform="translate(614.0,321.5) rotate(90)" x="0" y="0">N Lakeview Ave</text><text transform="translate(643.9,298.5) rotate(55.3)" x="0" y="0">N Cannon Dr</text><text transform="translate(496.8,431.0) rotate(90)" x="0" y="0">N Halsted St</text><text transform="translate(537.7,424.9) rotate(43.4)" x="0" y="0">N Lincoln Ave</text><text transform="translate(616.5,421.0) rotate(60)" x="0" y="0">Clark St</text><text transform="translate(440.0,578.5) rotate(90)" x="0" y="0">N Sheffield Ave</text><text transform="translate(15.2,686.4) rotate(90)" x="0" y="0">N Western Ave</text><text transform="translate(138.8,690.6) rotate(90)" x="0" y="0">N Damen Ave</text><text transform="translate(186.2,678.8) rotate(40.6)" x="0" y="0">N Milwaukee Ave</text><text transform="translate(181.2,728.7) rotate(-70.2)" x="0" y="0">N Wolcott Ave</text><text transform="translate(259.0,676.3) rotate(90)" x="0" y="0">Ashland Ave</text><text transform="translate(346.1,672.0) rotate(67.4)" x="0" y="0">N Elston Ave</text><text transform="translate(458.7,677.2) rotate(55.6)" x="0" y="0">N Kingsbury St</text><text transform="translate(64.7,759.4) rotate(-1.2)" x="0" y="0">W Division St</text><text transform="translate(385.6,752.6) rotate(-1.2)" x="0" y="0">W Division St</text><text transform="translate(70.4,881.6) rotate(-1.2)" x="0" y="0">W Chicago Ave</text><text transform="translate(320.2,875.9) rotate(-1.2)" x="0" y="0">W Chicago Ave</text><text transform="translate(559.9,871.0) rotate(-1.2)" x="0" y="0">W Chicago Ave</text><text transform="translate(21.0,975.4) rotate(90)" x="0" y="0">N Western Ave</text><text transform="translate(264.0,920.4) rotate(90)" x="0" y="0">Ashland Ave</text><text transform="translate(66.7,967.0) rotate(-1.2)" x="0" y="0">W Grand Ave</text><text transform="translate(397.5,960.8) rotate(-1.2)" x="0" y="0">W Grand Ave</text><text transform="translate(555.2,958.6) rotate(-1.2)" x="0" y="0">W Grand Ave</text><text transform="translate(69.2,985.6) rotate(-1.2)" x="0" y="0">W Hubbard St</text><text transform="translate(144.9,1011.3) rotate(90)" x="0" y="0">N Damen Ave</text><text transform="translate(66.7,1035.3) rotate(-1.2)" x="0" y="0">W Fulton St</text><text transform="translate(227.2,1032.0) rotate(-1.2)" x="0" y="0">W Fulton St</text><text transform="translate(266.8,1038.9) rotate(90)" x="0" y="0">Ashland Ave</text><text transform="translate(62.5,1066.8) rotate(-1.2)" x="0" y="0">W Lake St</text><text transform="translate(360.5,1055.0) rotate(-1.2)" x="0" y="0">W Lake St</text><text transform="translate(586.5,1051.4) rotate(-1.2)" x="0" y="0">W Lake St</text><text transform="translate(365.6,1077.0) rotate(-1.2)" x="0" y="0">W Randolph St</text><text transform="translate(585.8,1072.3) rotate(-1.2)" x="0" y="0">W Randolph St</text><text transform="translate(89.0,1094.6) rotate(-1.2)" x="0" y="0">W Washington Blvd</text><text transform="translate(76.0,1110.0) rotate(-1.2)" x="0" y="0">W Warren Blvd</text><text transform="translate(518.3,939.2) rotate(-1.2)" x="0" y="0">W Ohio St</text><text transform="translate(719.0,924.5) rotate(-1.2)" x="0" y="0">W Ontario St</text><text transform="translate(889.6,961.5) rotate(-1.2)" x="0" y="0">E Illinois St</text><text transform="translate(838.9,1016.0) rotate(7)" x="0" y="0">E Lower Wacker Dr</text><text transform="translate(928.5,1016.8) rotate(90)" x="0" y="0">Lake Shore Dr</text><text transform="translate(696.7,1032.8) rotate(-1.2)" x="0" y="0">W Wacker Dr</text><text transform="translate(701.2,1093.1) rotate(-1.2)" x="0" y="0">W Washington St</text><text transform="translate(845.6,1075.1) rotate(-1.2)" x="0" y="0">E Randolph St</text><text transform="translate(754.0,960.0) rotate(90)" x="0" y="0">N State St</text><text transform="translate(501.5,683.0) rotate(90)" x="0" y="0">N Halsted St</text></g><g font-family="Liberation Sans, sans-serif" font-size="12" letter-spacing="1.4" fill="#33363a" stroke="#fff" stroke-width="3" stroke-linejoin="round" paint-order="stroke" text-anchor="middle" dominant-baseline="central"><text x="95.5" y="254.0">LATHROP</text><text x="95.0" y="266.2">HOMES</text><text x="103.7" y="430.4">BUCKTOWN</text><text x="435.0" y="349.1">SHEFFIELD</text><text x="435.3" y="361.9">&amp; DEPAUL</text><text x="559.0" y="326.3">PARK WEST</text><text x="496.5" y="384.6">LINCOLN PARK</text><text x="137.0" y="635.5">WICKER PARK</text><text x="264.0" y="755.0">WEST TOWN</text><text x="50.8" y="814.2">UKRAINIAN</text><text x="50.8" y="827.7">VILLAGE</text><text x="202.8" y="814.2">EAST VILLAGE</text><text x="308.5" y="822.0">NOBLE SQUARE</text><text x="487.5" y="905.2">RIVER WEST</text><text x="14.0" y="922.3">PARK</text><text x="453.6" y="1027.2">FULTON MARKET</text><text x="453.6" y="1040.0">DISTRICT</text><text x="454.8" y="1096.0">WEST LOOP</text><text x="587.1" y="793.3">CABRINI-GREEN</text><text x="564.3" y="981.7">FULTON RIVER</text><text x="563.6" y="994.3">DISTRICT</text><text x="713.3" y="752.5">NORTH SIDE</text><text x="750.0" y="808.7">RUSH &amp;</text><text x="750.3" y="821.2">DIVISION</text><text x="803.6" y="892.3">MAGNIFICENT</text><text x="803.8" y="905.2">MILE</text><text x="680.0" y="939.7">RIVER NORTH</text><text x="855.7" y="933.6">STREETERVILLE</text></g><g font-family="Liberation Sans, sans-serif" font-size="12" letter-spacing="1.4" fill="#33363a" stroke="#33363a" stroke-width="0.45" text-anchor="middle" dominant-baseline="central"><text x="95.5" y="254.0">LATHROP</text><text x="95.0" y="266.2">HOMES</text><text x="103.7" y="430.4">BUCKTOWN</text><text x="435.0" y="349.1">SHEFFIELD</text><text x="435.3" y="361.9">&amp; DEPAUL</text><text x="559.0" y="326.3">PARK WEST</text><text x="496.5" y="384.6">LINCOLN PARK</text><text x="137.0" y="635.5">WICKER PARK</text><text x="264.0" y="755.0">WEST TOWN</text><text x="50.8" y="814.2">UKRAINIAN</text><text x="50.8" y="827.7">VILLAGE</text><text x="202.8" y="814.2">EAST VILLAGE</text><text x="308.5" y="822.0">NOBLE SQUARE</text><text x="487.5" y="905.2">RIVER WEST</text><text x="14.0" y="922.3">PARK</text><text x="453.6" y="1027.2">FULTON MARKET</text><text x="453.6" y="1040.0">DISTRICT</text><text x="454.8" y="1096.0">WEST LOOP</text><text x="587.1" y="793.3">CABRINI-GREEN</text><text x="564.3" y="981.7">FULTON RIVER</text><text x="563.6" y="994.3">DISTRICT</text><text x="713.3" y="752.5">NORTH SIDE</text><text x="750.0" y="808.7">RUSH &amp;</text><text x="750.3" y="821.2">DIVISION</text><text x="803.6" y="892.3">MAGNIFICENT</text><text x="803.8" y="905.2">MILE</text><text x="680.0" y="939.7">RIVER NORTH</text><text x="855.7" y="933.6">STREETERVILLE</text></g><g font-family="Liberation Sans, sans-serif" font-size="15" fill="#1e8a5a" stroke="#fff" stroke-width="3" stroke-linejoin="round" paint-order="stroke" text-anchor="middle" dominant-baseline="central"><text x="535.1" y="464.3">Oz Park</text><text x="286.9" y="1084.4">Union Park</text><text x="974.0" y="957.5">Polk Bros Park</text><text x="822.7" y="1099.9">Millennium</text><text x="822.0" y="1118.0">Park</text></g><text x="426.2" y="736.3" font-family="Liberation Sans, sans-serif" font-size="15" font-style="italic" fill="#3c4043" stroke="#fff" stroke-width="3" paint-order="stroke" text-anchor="middle" dominant-baseline="central">Goose Island</text><path transform="translate(588.4,358.0)" d="M0,-1 C3,-2 9,-5 15,-8 C21,-11 24,-16 22,-20 C20,-24 13,-24 9,-20 C5,-15 2,-7 0,-1 Z" fill="#000" opacity="0.2" filter="url(#shblur)"/><path transform="translate(605.6,411.0)" d="M0,-1 C3,-2 9,-5 15,-8 C21,-11 24,-16 22,-20 C20,-24 13,-24 9,-20 C5,-15 2,-7 0,-1 Z" fill="#000" opacity="0.2" filter="url(#shblur)"/><path transform="translate(392.0,436.0)" d="M0,-1 C3,-2 9,-5 15,-8 C21,-11 24,-16 22,-20 C20,-24 13,-24 9,-20 C5,-15 2,-7 0,-1 Z" fill="#000" opacity="0.2" filter="url(#shblur)"/><path transform="translate(648.6,484.0)" d="M0,-1 C3,-2 9,-5 15,-8 C21,-11 24,-16 22,-20 C20,-24 13,-24 9,-20 C5,-15 2,-7 0,-1 Z" fill="#000" opacity="0.2" filter="url(#shblur)"/><path transform="translate(185.0,484.5)" d="M0,-1 C3,-2 9,-5 15,-8 C21,-11 24,-16 22,-20 C20,-24 13,-24 9,-20 C5,-15 2,-7 0,-1 Z" fill="#000" opacity="0.2" filter="url(#shblur)"/><path transform="translate(226.0,619.0)" d="M0,-1 C3,-2 9,-5 15,-8 C21,-11 24,-16 22,-20 C20,-24 13,-24 9,-20 C5,-15 2,-7 0,-1 Z" fill="#000" opacity="0.2" filter="url(#shblur)"/><path transform="translate(129.0,622.5)" d="M0,-1 C3,-2 9,-5 15,-8 C21,-11 24,-16 22,-20 C20,-24 13,-24 9,-20 C5,-15 2,-7 0,-1 Z" fill="#000" opacity="0.2" filter="url(#shblur)"/><path transform="translate(396.0,722.0)" d="M0,-1 C3,-2 9,-5 15,-8 C21,-11 24,-16 22,-20 C20,-24 13,-24 9,-20 C5,-15 2,-7 0,-1 Z" fill="#000" opacity="0.2" filter="url(#shblur)"/><path transform="translate(702.4,789.0)" d="M0,-1 C3,-2 9,-5 15,-8 C21,-11 24,-16 22,-20 C20,-24 13,-24 9,-20 C5,-15 2,-7 0,-1 Z" fill="#000" opacity="0.2" filter="url(#shblur)"/><path transform="translate(764.8,804.0)" d="M0,-1 C3,-2 9,-5 15,-8 C21,-11 24,-16 22,-20 C20,-24 13,-24 9,-20 C5,-15 2,-7 0,-1 Z" fill="#000" opacity="0.2" filter="url(#shblur)"/><path transform="translate(769.4,828.5)" d="M0,-1 C3,-2 9,-5 15,-8 C21,-11 24,-16 22,-20 C20,-24 13,-24 9,-20 C5,-15 2,-7 0,-1 Z" fill="#000" opacity="0.2" filter="url(#shblur)"/><path transform="translate(762.4,869.2)" d="M0,-1 C3,-2 9,-5 15,-8 C21,-11 24,-16 22,-20 C20,-24 13,-24 9,-20 C5,-15 2,-7 0,-1 Z" fill="#000" opacity="0.2" filter="url(#shblur)"/><path transform="translate(871.1,915.5)" d="M0,-1 C3,-2 9,-5 15,-8 C21,-11 24,-16 22,-20 C20,-24 13,-24 9,-20 C5,-15 2,-7 0,-1 Z" fill="#000" opacity="0.2" filter="url(#shblur)"/><path transform="translate(782.0,955.3)" d="M0,-1 C3,-2 9,-5 15,-8 C21,-11 24,-16 22,-20 C20,-24 13,-24 9,-20 C5,-15 2,-7 0,-1 Z" fill="#000" opacity="0.2" filter="url(#shblur)"/><path transform="translate(695.4,958.5)" d="M0,-1 C3,-2 9,-5 15,-8 C21,-11 24,-16 22,-20 C20,-24 13,-24 9,-20 C5,-15 2,-7 0,-1 Z" fill="#000" opacity="0.2" filter="url(#shblur)"/><path transform="translate(642.6,977.0)" d="M0,-1 C3,-2 9,-5 15,-8 C21,-11 24,-16 22,-20 C20,-24 13,-24 9,-20 C5,-15 2,-7 0,-1 Z" fill="#000" opacity="0.2" filter="url(#shblur)"/><path transform="translate(756.4,993.0)" d="M0,-1 C3,-2 9,-5 15,-8 C21,-11 24,-16 22,-20 C20,-24 13,-24 9,-20 C5,-15 2,-7 0,-1 Z" fill="#000" opacity="0.2" filter="url(#shblur)"/><path transform="translate(738.5,998.3)" d="M0,-1 C3,-2 9,-5 15,-8 C21,-11 24,-16 22,-20 C20,-24 13,-24 9,-20 C5,-15 2,-7 0,-1 Z" fill="#000" opacity="0.2" filter="url(#shblur)"/><path transform="translate(496.0,1061.0)" d="M0,-1 C3,-2 9,-5 15,-8 C21,-11 24,-16 22,-20 C20,-24 13,-24 9,-20 C5,-15 2,-7 0,-1 Z" fill="#000" opacity="0.2" filter="url(#shblur)"/><path transform="translate(452.3,1062.6)" d="M0,-1 C3,-2 9,-5 15,-8 C21,-11 24,-16 22,-20 C20,-24 13,-24 9,-20 C5,-15 2,-7 0,-1 Z" fill="#000" opacity="0.2" filter="url(#shblur)"/><path transform="translate(496.1,1066.0)" d="M0,-1 C3,-2 9,-5 15,-8 C21,-11 24,-16 22,-20 C20,-24 13,-24 9,-20 C5,-15 2,-7 0,-1 Z" fill="#000" opacity="0.2" filter="url(#shblur)"/><path transform="translate(757.5,1082.0)" d="M0,-1 C3,-2 9,-5 15,-8 C21,-11 24,-16 22,-20 C20,-24 13,-24 9,-20 C5,-15 2,-7 0,-1 Z" fill="#000" opacity="0.2" filter="url(#shblur)"/><path transform="translate(607.2,1116.0)" d="M0,-1 C3,-2 9,-5 15,-8 C21,-11 24,-16 22,-20 C20,-24 13,-24 9,-20 C5,-15 2,-7 0,-1 Z" fill="#000" opacity="0.2" filter="url(#shblur)"/><path transform="translate(759.0,1137.0)" d="M0,-1 C3,-2 9,-5 15,-8 C21,-11 24,-16 22,-20 C20,-24 13,-24 9,-20 C5,-15 2,-7 0,-1 Z" fill="#000" opacity="0.2" filter="url(#shblur)"/><path transform="translate(756.2,1137.5)" d="M0,-1 C3,-2 9,-5 15,-8 C21,-11 24,-16 22,-20 C20,-24 13,-24 9,-20 C5,-15 2,-7 0,-1 Z" fill="#000" opacity="0.2" filter="url(#shblur)"/><g transform="translate(575.9,317.0)"><path d="M12.5,41 C10.8,35 1.2,25.5 -0.1,16 A12.8,12.8 0 1 1 25.1,16 C23.8,25.5 14.2,35 12.5,41 Z" fill="url(#mgb)" stroke="#27679e" stroke-width="0.8" stroke-opacity="0.6"/><circle cx="12.5" cy="13" r="4.4" fill="#fff"/></g><g transform="translate(593.1,370.0)"><path d="M12.5,41 C10.8,35 1.2,25.5 -0.1,16 A12.8,12.8 0 1 1 25.1,16 C23.8,25.5 14.2,35 12.5,41 Z" fill="url(#mgo)" stroke="#98652b" stroke-width="0.8" stroke-opacity="0.6"/><circle cx="12.5" cy="13" r="4.4" fill="#fff"/></g><g transform="translate(379.5,395.0)"><path d="M12.5,41 C10.8,35 1.2,25.5 -0.1,16 A12.8,12.8 0 1 1 25.1,16 C23.8,25.5 14.2,35 12.5,41 Z" fill="url(#mgb)" stroke="#27679e" stroke-width="0.8" stroke-opacity="0.6"/><circle cx="12.5" cy="13" r="4.4" fill="#fff"/></g><g transform="translate(636.1,443.0)"><path d="M12.5,41 C10.8,35 1.2,25.5 -0.1,16 A12.8,12.8 0 1 1 25.1,16 C23.8,25.5 14.2,35 12.5,41 Z" fill="url(#mgo)" stroke="#98652b" stroke-width="0.8" stroke-opacity="0.6"/><circle cx="12.5" cy="13" r="4.4" fill="#fff"/></g><g transform="translate(172.5,443.5)"><path d="M12.5,41 C10.8,35 1.2,25.5 -0.1,16 A12.8,12.8 0 1 1 25.1,16 C23.8,25.5 14.2,35 12.5,41 Z" fill="url(#mgo)" stroke="#98652b" stroke-width="0.8" stroke-opacity="0.6"/><circle cx="12.5" cy="13" r="4.4" fill="#fff"/></g><g transform="translate(213.5,578.0)"><path d="M12.5,41 C10.8,35 1.2,25.5 -0.1,16 A12.8,12.8 0 1 1 25.1,16 C23.8,25.5 14.2,35 12.5,41 Z" fill="url(#mgo)" stroke="#98652b" stroke-width="0.8" stroke-opacity="0.6"/><circle cx="12.5" cy="13" r="4.4" fill="#fff"/></g><g transform="translate(116.5,581.5)"><path d="M12.5,41 C10.8,35 1.2,25.5 -0.1,16 A12.8,12.8 0 1 1 25.1,16 C23.8,25.5 14.2,35 12.5,41 Z" fill="url(#mgo)" stroke="#98652b" stroke-width="0.8" stroke-opacity="0.6"/><circle cx="12.5" cy="13" r="4.4" fill="#fff"/></g><g transform="translate(383.5,681.0)"><path d="M12.5,41 C10.8,35 1.2,25.5 -0.1,16 A12.8,12.8 0 1 1 25.1,16 C23.8,25.5 14.2,35 12.5,41 Z" fill="url(#mgb)" stroke="#27679e" stroke-width="0.8" stroke-opacity="0.6"/><circle cx="12.5" cy="13" r="4.4" fill="#fff"/></g><g transform="translate(689.9,748.0)"><path d="M12.5,41 C10.8,35 1.2,25.5 -0.1,16 A12.8,12.8 0 1 1 25.1,16 C23.8,25.5 14.2,35 12.5,41 Z" fill="url(#mgo)" stroke="#98652b" stroke-width="0.8" stroke-opacity="0.6"/><circle cx="12.5" cy="13" r="4.4" fill="#fff"/></g><g transform="translate(752.3,763.0)"><path d="M12.5,41 C10.8,35 1.2,25.5 -0.1,16 A12.8,12.8 0 1 1 25.1,16 C23.8,25.5 14.2,35 12.5,41 Z" fill="url(#mgr)" stroke="#982e40" stroke-width="0.8" stroke-opacity="0.6"/><circle cx="12.5" cy="13" r="4.4" fill="#fff"/></g><g transform="translate(756.9,787.5)"><path d="M12.5,41 C10.8,35 1.2,25.5 -0.1,16 A12.8,12.8 0 1 1 25.1,16 C23.8,25.5 14.2,35 12.5,41 Z" fill="url(#mgo)" stroke="#98652b" stroke-width="0.8" stroke-opacity="0.6"/><circle cx="12.5" cy="13" r="4.4" fill="#fff"/></g><g transform="translate(749.9,828.2)"><path d="M12.5,41 C10.8,35 1.2,25.5 -0.1,16 A12.8,12.8 0 1 1 25.1,16 C23.8,25.5 14.2,35 12.5,41 Z" fill="url(#mgr)" stroke="#982e40" stroke-width="0.8" stroke-opacity="0.6"/><circle cx="12.5" cy="13" r="4.4" fill="#fff"/></g><g transform="translate(858.6,874.5)"><path d="M12.5,41 C10.8,35 1.2,25.5 -0.1,16 A12.8,12.8 0 1 1 25.1,16 C23.8,25.5 14.2,35 12.5,41 Z" fill="url(#mgo)" stroke="#98652b" stroke-width="0.8" stroke-opacity="0.6"/><circle cx="12.5" cy="13" r="4.4" fill="#fff"/></g><g transform="translate(769.5,914.3)"><path d="M12.5,41 C10.8,35 1.2,25.5 -0.1,16 A12.8,12.8 0 1 1 25.1,16 C23.8,25.5 14.2,35 12.5,41 Z" fill="url(#mgb)" stroke="#27679e" stroke-width="0.8" stroke-opacity="0.6"/><circle cx="12.5" cy="13" r="4.4" fill="#fff"/></g><g transform="translate(682.9,917.5)"><path d="M12.5,41 C10.8,35 1.2,25.5 -0.1,16 A12.8,12.8 0 1 1 25.1,16 C23.8,25.5 14.2,35 12.5,41 Z" fill="url(#mgo)" stroke="#98652b" stroke-width="0.8" stroke-opacity="0.6"/><circle cx="12.5" cy="13" r="4.4" fill="#fff"/></g><g transform="translate(630.1,936.0)"><path d="M12.5,41 C10.8,35 1.2,25.5 -0.1,16 A12.8,12.8 0 1 1 25.1,16 C23.8,25.5 14.2,35 12.5,41 Z" fill="url(#mgb)" stroke="#27679e" stroke-width="0.8" stroke-opacity="0.6"/><circle cx="12.5" cy="13" r="4.4" fill="#fff"/></g><g transform="translate(743.9,952.0)"><path d="M12.5,41 C10.8,35 1.2,25.5 -0.1,16 A12.8,12.8 0 1 1 25.1,16 C23.8,25.5 14.2,35 12.5,41 Z" fill="url(#mgb)" stroke="#27679e" stroke-width="0.8" stroke-opacity="0.6"/><circle cx="12.5" cy="13" r="4.4" fill="#fff"/></g><g transform="translate(726.0,957.3)"><path d="M12.5,41 C10.8,35 1.2,25.5 -0.1,16 A12.8,12.8 0 1 1 25.1,16 C23.8,25.5 14.2,35 12.5,41 Z" fill="url(#mgr)" stroke="#982e40" stroke-width="0.8" stroke-opacity="0.6"/><circle cx="12.5" cy="13" r="4.4" fill="#fff"/></g><g transform="translate(483.5,1020.0)"><path d="M12.5,41 C10.8,35 1.2,25.5 -0.1,16 A12.8,12.8 0 1 1 25.1,16 C23.8,25.5 14.2,35 12.5,41 Z" fill="url(#mgb)" stroke="#27679e" stroke-width="0.8" stroke-opacity="0.6"/><circle cx="12.5" cy="13" r="4.4" fill="#fff"/></g><g transform="translate(439.8,1021.6)"><path d="M12.5,41 C10.8,35 1.2,25.5 -0.1,16 A12.8,12.8 0 1 1 25.1,16 C23.8,25.5 14.2,35 12.5,41 Z" fill="url(#mgo)" stroke="#98652b" stroke-width="0.8" stroke-opacity="0.6"/><circle cx="12.5" cy="13" r="4.4" fill="#fff"/></g><g transform="translate(483.6,1025.0)"><path d="M12.5,41 C10.8,35 1.2,25.5 -0.1,16 A12.8,12.8 0 1 1 25.1,16 C23.8,25.5 14.2,35 12.5,41 Z" fill="url(#mgo)" stroke="#98652b" stroke-width="0.8" stroke-opacity="0.6"/><circle cx="12.5" cy="13" r="4.4" fill="#fff"/></g><g transform="translate(745.0,1041.0)"><path d="M12.5,41 C10.8,35 1.2,25.5 -0.1,16 A12.8,12.8 0 1 1 25.1,16 C23.8,25.5 14.2,35 12.5,41 Z" fill="url(#mgb)" stroke="#27679e" stroke-width="0.8" stroke-opacity="0.6"/><circle cx="12.5" cy="13" r="4.4" fill="#fff"/></g><g transform="translate(594.7,1075.0)"><path d="M12.5,41 C10.8,35 1.2,25.5 -0.1,16 A12.8,12.8 0 1 1 25.1,16 C23.8,25.5 14.2,35 12.5,41 Z" fill="url(#mgb)" stroke="#27679e" stroke-width="0.8" stroke-opacity="0.6"/><circle cx="12.5" cy="13" r="4.4" fill="#fff"/></g><g transform="translate(746.5,1096.0)"><path d="M12.5,41 C10.8,35 1.2,25.5 -0.1,16 A12.8,12.8 0 1 1 25.1,16 C23.8,25.5 14.2,35 12.5,41 Z" fill="url(#mgr)" stroke="#982e40" stroke-width="0.8" stroke-opacity="0.6"/><circle cx="12.5" cy="13" r="4.4" fill="#fff"/></g><g transform="translate(743.7,1096.5)"><path d="M12.5,41 C10.8,35 1.2,25.5 -0.1,16 A12.8,12.8 0 1 1 25.1,16 C23.8,25.5 14.2,35 12.5,41 Z" fill="url(#mgo)" stroke="#98652b" stroke-width="0.8" stroke-opacity="0.6"/><circle cx="12.5" cy="13" r="4.4" fill="#fff"/></g></svg>
<div id="zoom"><div class="zb" style="top:0;border-bottom:1px solid #ccc;height:32px;"></div><div class="zbar" style="left:10px;top:15px;width:14px;height:3px;"></div><div class="zbar" style="left:15.5px;top:9.5px;width:3px;height:14px;"></div><div class="zbar" style="left:10px;top:47px;width:14px;height:3px;"></div></div>

<div id="popup">
 <div class="pclose">&#215;</div>
 <div class="ptitle">Gateway to West Loop</div>
 <div class="paddr">16-40 S. Halsted</div>
 <div class="pcol" style="left:23px;top:92px;">
   <div class="plab">Square Footage</div>
   <div class="pval">95,862 <span class="unit">sqft</span> <span class="arrd"></span></div>
   <div class="psm">Lowest 37%</div>
 </div>
 <div class="pcol" style="left:146px;top:92px;">
   <div class="plab">GHG Intensity</div>
   <div class="pval">22.7 <span class="unit">kg/sqft</span> <span class="arru"></span></div>
   <div class="psm">#45 Highest</div>
 </div>
 <div class="pcol" style="left:23px;top:165px;">
   <div class="plab">Total GHG Emissions</div>
   <div class="pval">2,176 <span class="unit">tons</span> <span class="arru"></span></div>
   <div class="psm">Highest 19%</div>
 </div>
 <div class="plink">View More Details</div>
 <div class="ptipc"><div class="ptip"></div></div>
</div>

<div id="glogo">Google</div>
<div id="attr1">Leaflet</div>
<div id="attr2"><span style="border:none">Map data &#169;2026 Google</span><span>Terms</span><span>Report a map error</span></div>
</div>
</body></html>
